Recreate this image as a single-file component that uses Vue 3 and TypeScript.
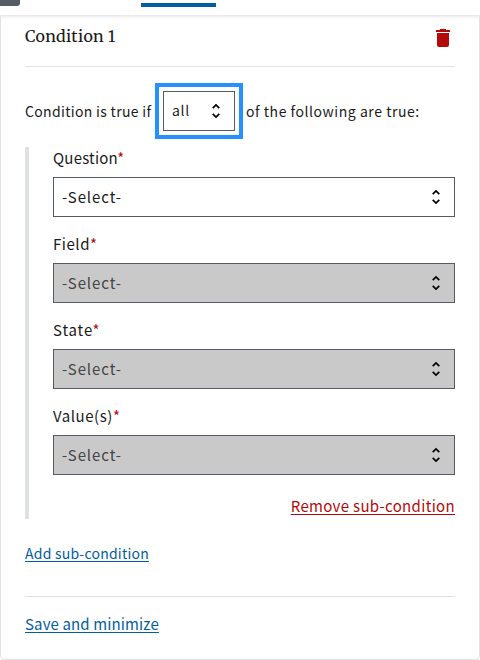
<script setup lang="ts">
import { ref } from 'vue'

interface Field {
  id: string
  label: string
  disabled: boolean
}

const fields: Field[] = [
  { id: 'question', label: 'Question', disabled: false },
  { id: 'field', label: 'Field', disabled: true },
  { id: 'state', label: 'State', disabled: true },
  { id: 'values', label: 'Value(s)', disabled: true },
]
const operator = ref('all')
</script>

<template>
  <div class="page">
    <header class="topbar">
      <span class="chip"></span>
      <span class="tab"></span>
    </header>
    <section class="card">
      <div class="head">
        <h3>Condition 1</h3>
        <button class="trash" type="button">
          <svg width="14" height="18" viewBox="0 0 14 18">
            <path d="M4 0h6v1h4v2H0V1h4zM1 4h12v12q0 2-2 2H3q-2 0-2-2z" fill="#b50909" />
          </svg>
        </button>
      </div>
      <div class="rule-line">
        <span class="before">Condition is true if</span>
        <div class="select operator">
          <select v-model="operator">
            <option>all</option>
            <option>any</option>
          </select>
          <svg class="chevrons" width="8" height="16" viewBox="0 0 8 16">
            <path d="M.7 5.2 4 1.9l3.3 3.3M.7 10.8 4 14.1l3.3-3.3" />
          </svg>
        </div>
        <span class="after">of the following are true:</span>
      </div>
      <div class="group">
        <div v-for="f in fields" :key="f.id" class="row">
          <label :for="f.id" :class="f.id">{{ f.label }}<span class="star">*</span></label>
          <div class="select">
            <select :id="f.id" :disabled="f.disabled">
              <option>-Select-</option>
            </select>
            <svg class="chevrons" width="8" height="16" viewBox="0 0 8 16">
              <path d="M.7 5.2 4 1.9l3.3 3.3M.7 10.8 4 14.1l3.3-3.3" />
            </svg>
          </div>
        </div>
        <div class="remove-row"><a class="remove">Remove sub-condition</a></div>
      </div>
      <div class="add-row"><a class="add">Add sub-condition</a></div>
      <div class="save-row"><a class="save">Save and minimize</a></div>
    </section>
  </div>
</template>

<style>
body {
  margin: 0;
  background: #fff;
}
</style>

<style scoped>
.page {
  height: 660px;
  display: flex;
  flex-direction: column;
  overflow: hidden;
  color: #1b1b1b;
  font-family: 'Source Sans Pro', 'Noto Sans CJK SC', sans-serif;
  font-size: 15px;
}
.topbar {
  height: 15px;
  flex: none;
  display: flex;
  box-shadow: 0 1px 4px rgba(0, 0, 0, 0.14);
}
.chip {
  width: 20px;
  height: 6px;
  background: #565c65;
  border-radius: 0 0 3px 0;
}
.tab {
  width: 75px;
  height: 4px;
  margin: 3px 0 0 121px;
  background: #005ea2;
}
.card {
  box-sizing: border-box;
  height: 645px;
  border: 1px solid #dfe1e2;
  border-top: 0;
  border-radius: 0 0 5px 5px;
  padding: 0 24px;
}
.head {
  height: 51px;
  display: flex;
  justify-content: space-between;
  align-items: flex-start;
  border-bottom: 1px solid #dfe1e2;
}
h3 {
  margin: 10px 0 0;
  font: 400 16px/22px Merriweather, 'DejaVu Serif Condensed', 'DejaVu Serif', serif;
  letter-spacing: 0.3px;
}
.trash {
  display: flex;
  margin: 14px 5px 0 0;
  padding: 0;
  border: 0;
  background: none;
}
.rule-line {
  height: 40px;
  margin-top: 24px;
  display: flex;
  align-items: center;
  font-size: 14px;
  white-space: nowrap;
}
.before {
  width: 138px;
  letter-spacing: 0.33px;
}
.after {
  margin-left: 11px;
  letter-spacing: 0.54px;
}
.select {
  display: grid;
  align-items: center;
  height: 40px;
  letter-spacing: 0.9px;
}
.select > * {
  grid-area: 1 / 1;
}
.select select {
  appearance: none;
  box-sizing: border-box;
  width: 100%;
  height: 40px;
  margin: 0;
  border: 1px solid #565c65;
  border-radius: 0;
  padding: 0 8px 2px;
  background: #fff;
  color: #1b1b1b;
  font: inherit;
  letter-spacing: inherit;
}
.select select:disabled {
  background: #c9c9c9;
  color: #454545;
  opacity: 1;
}
.operator {
  width: 72px;
  outline: 4px solid #2491ff;
  outline-offset: 4px;
  letter-spacing: 0.7px;
}
.chevrons {
  justify-self: end;
  margin-right: 15px;
  fill: none;
  stroke: #000;
  stroke-width: 1.7;
  pointer-events: none;
}
.group {
  box-sizing: border-box;
  height: 372px;
  margin-top: 16px;
  border-left: 4px solid #dfe1e2;
  padding-left: 24px;
}
.row {
  height: 86px;
}
label {
  display: block;
  height: 30px;
  line-height: 22px;
  letter-spacing: 0.55px;
}
label.question {
  letter-spacing: 0.2px;
}
label.state {
  letter-spacing: 0.85px;
}
.star {
  color: #b50909;
}
.remove-row {
  display: flex;
  justify-content: flex-end;
  line-height: 30px;
}
a {
  text-decoration: underline;
  text-underline-offset: 2px;
  color: #005ea2;
}
.remove {
  color: #b50909;
  letter-spacing: 0.33px;
}
.add-row {
  height: 77px;
  line-height: 69px;
  border-bottom: 1px solid #dfe1e2;
  font-size: 14px;
}
.add {
  letter-spacing: 0.22px;
}
.save-row {
  line-height: 54px;
}
.save {
  letter-spacing: 0.13px;
}
</style>
